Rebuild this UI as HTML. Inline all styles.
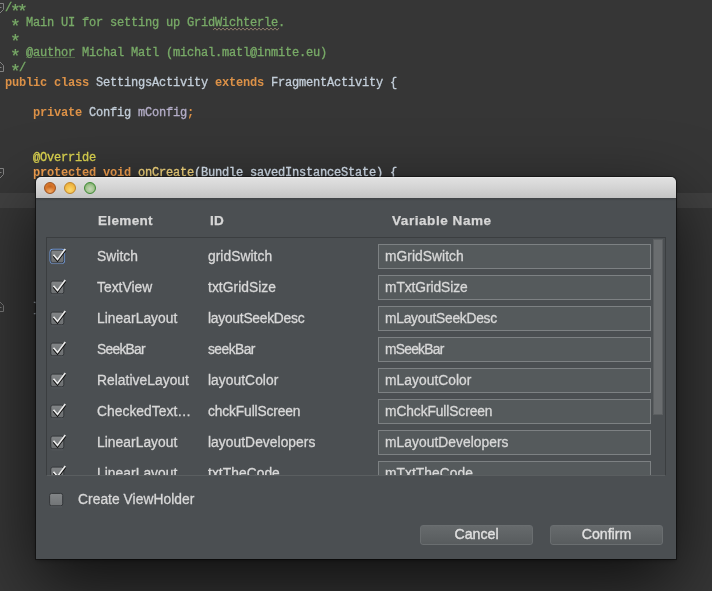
<!DOCTYPE html>
<html>
<head>
<meta charset="utf-8">
<title>Dialog</title>
<style>
html,body{margin:0;padding:0;}
body{width:712px;height:591px;overflow:hidden;background:#363636;position:relative;font-family:"Liberation Sans",sans-serif;}
#ed{position:absolute;left:0;top:0;width:712px;height:591px;overflow:hidden;will-change:transform;}
.caret{position:absolute;top:193px;height:15px;background:rgba(255,255,255,0.05);}
.ln{position:absolute;left:5px;height:15px;line-height:15px;white-space:pre;font-family:"Liberation Mono",monospace;font-size:12px;letter-spacing:-0.2px;color:#c3ced9;-webkit-text-stroke:0.3px currentColor;}
.c{color:#78aa67;}
.s{display:inline-block;width:11px;margin:0 -2px;letter-spacing:0;font-size:18px;line-height:1px;position:relative;top:6px;text-align:center;-webkit-text-stroke:0.2px currentColor;}
.k{color:#dc9147;font-weight:bold;-webkit-text-stroke:0;}
.f{color:#b4aec8;}
.a{color:#d0c846;}
.m{color:#f5c673;}
#dlg{position:absolute;left:36px;top:177px;width:640px;height:382px;background:#4b4f52;border-radius:5px 5px 0 0;box-shadow:0 25px 70px 0 rgba(0,0,0,0.72),0 1px 5px rgba(0,0,0,0.4),0 0 0 1px rgba(0,0,0,0.4);}
#tb{position:absolute;left:0;top:0;width:640px;height:21px;border-radius:5px 5px 0 0;background:linear-gradient(#eeeeee 0,#e0e0e0 7%,#d4d4d4 50%,#c4c4c4 100%);}
#tbs{position:absolute;left:0;top:21px;width:640px;height:3px;background:linear-gradient(#3e4144,#4b4f52);}
.tl{position:absolute;top:5px;width:12px;height:12px;border-radius:50%;box-sizing:border-box;}
.t{position:absolute;white-space:pre;font-size:13.8px;line-height:16px;letter-spacing:0.05px;color:#d8d8d8;-webkit-text-stroke:0.3px currentColor;}
.h{-webkit-text-stroke:0.25px currentColor;font-weight:bold;font-size:12.3px;color:#d6d6d6;letter-spacing:0.3px;transform:scaleX(1.1);transform-origin:0 0;}
#tbl{position:absolute;left:10px;top:60px;width:618px;height:237px;border:1px solid #3b3e40;border-bottom:1px solid #5a5e60;overflow:hidden;}
.row{position:absolute;left:0;width:619px;height:25px;}
.cb{position:absolute;left:2px;top:1.5px;width:19px;height:19px;overflow:visible;}
.e{left:50px;top:5px;}
.i{left:161px;top:5px;}
.fld{position:absolute;left:331px;top:0;width:271px;height:23px;border:1px solid #7d8183;background:#555a5c;}
.v{left:6px;top:4px;}
#sb{position:absolute;left:606px;top:1px;width:10px;height:176px;background:#6a6d6f;border:1px solid #5c5f61;box-sizing:border-box;}
.btn{position:absolute;top:348px;width:113px;height:20px;box-sizing:border-box;border:1px solid #6a6e70;border-radius:3px;background:linear-gradient(#666a6c,#585c5e);color:#e0e0e0;font-size:14.2px;line-height:17px;text-align:center;-webkit-text-stroke:0.35px currentColor;}
</style>
</head>
<body>
<svg width="0" height="0" style="position:absolute">
<defs>
<linearGradient id="cg" x1="0" y1="0" x2="0" y2="1"><stop offset="0" stop-color="#838688"/><stop offset="1" stop-color="#6b6e70"/></linearGradient>
<linearGradient id="cg2" x1="0" y1="0" x2="0" y2="1"><stop offset="0" stop-color="#838688"/><stop offset="1" stop-color="#717476"/></linearGradient>
<filter id="bl" x="-50%" y="-50%" width="200%" height="200%"><feGaussianBlur stdDeviation="0.7"/></filter>
<symbol id="ck" viewBox="0 0 19 19">
<rect x="1.8" y="4.1" width="13" height="12.7" rx="2" fill="url(#cg)" stroke="#34373a"/>
<path d="M2.5 17.8 H14" stroke="#62666a" stroke-width="0.8" opacity="0.7"/>
<path d="M4.5 10.2 L8.5 14.9 L16.3 4.4" fill="none" stroke="#0c0c0c" stroke-width="1.8" stroke-linejoin="miter"/>
<path d="M4.5 8.8 L8.5 13.5 L16.3 3.0" fill="none" stroke="#ececec" stroke-width="1.55" stroke-linejoin="miter"/>
</symbol>
<symbol id="ckf" viewBox="0 0 19 19">
<rect x="1.5" y="3.8" width="13.6" height="13.3" rx="2.5" fill="none" stroke="#76a1e6" stroke-width="1.9" filter="url(#bl)"/>
<use href="#ck"/>
</symbol>
<symbol id="cku" viewBox="0 0 19 19">
<rect x="1.6" y="4.4" width="13.1" height="12.4" rx="2" fill="url(#cg2)" stroke="#34373a"/>
<path d="M2.5 17.8 H14" stroke="#62666a" stroke-width="0.8" opacity="0.7"/>
</symbol>
</defs></svg>
<div id="ed">
<svg id="folds" width="10" height="330" viewBox="0 0 10 330" style="position:absolute;left:0;top:0" fill="none" stroke="#828282" stroke-width="1">
<path d="M-1 3.5 H3.5 V9.5 L-0.5 13.5 M-1 7.5 H1.5"/>
<path d="M-0.5 61.5 L3.5 65.5 V71.5 H-1 M-1 67.5 H1.5"/>
<path d="M-1 168.5 H3.5 V174.5 L-0.5 178.5 M-1 172.5 H1.5"/>
<path d="M-0.5 301.5 L3.5 305.5 V311.5 H-1 M-1 307.5 H1.5" stroke="#777"/>
</svg>
<div class="ln" style="top:300.5px;color:#aab3bc">    }</div>
<svg width="68" height="5" viewBox="0 0 68 5" style="position:absolute;left:213px;top:26.5px" fill="none" stroke="#a58e78" stroke-width="0.8"><path d="M0 3.2 L2 1 L4 3.2 L6 1 L8 3.2 L10 1 L12 3.2 L14 1 L16 3.2 L18 1 L20 3.2 L22 1 L24 3.2 L26 1 L28 3.2 L30 1 L32 3.2 L34 1 L36 3.2 L38 1 L40 3.2 L42 1 L44 3.2 L46 1 L48 3.2 L50 1 L52 3.2 L54 1 L56 3.2 L58 1 L60 3.2 L62 1 L64 3.2 L66 1"/></svg>
<div class="ln c" style="top:0.5px">/<span class="s">*</span><span class="s">*</span></div>
<div class="ln c" style="top:15.5px"> <span class="s">*</span> Main UI for setting up GridWichterle.</div>
<div class="ln c" style="top:30.5px"> <span class="s">*</span></div>
<div class="ln c" style="top:45.5px"> <span class="s">*</span> <span style="text-decoration:underline;text-decoration-color:rgba(120,170,103,0.38);text-decoration-thickness:1px;text-underline-offset:1px">@author</span> Michal Matl (michal.matl@inmite.eu)</div>
<div class="ln c" style="top:60.5px"> <span class="s">*</span>/</div>
<div class="ln" style="top:75.5px"><span class="k">public class</span> SettingsActivity <span class="k">extends</span> FragmentActivity {</div>
<div class="ln" style="top:105.5px">    <span class="k">private</span> Config <span class="f">mConfig</span><span class="k">;</span></div>
<div class="ln" style="top:150.5px">    <span class="a" style="color:#ded650">@Override</span></div>
<div class="ln" style="top:165.5px;color:#dce8f5">    <span class="k" style="color:#f9a451">protected void</span> <span class="m" style="color:#ffdf82">onCreate</span>(Bundle savedInstanceState) {</div>
</div>

<div id="dlg">
<div id="tb">
<div class="tl" style="left:8px;background:radial-gradient(circle at 50% 85%,#f2ad66 0%,rgba(242,173,102,0) 50%),radial-gradient(circle at 50% 42%,#c2631e 0%,#db792d 55%,#b85a1a 100%);border:1px solid #9c5320;"></div>
<div class="tl" style="left:28px;background:radial-gradient(circle at 50% 70%,#fbd870 0%,#f3be4a 50%,#e2a030 100%);border:1px solid #c08428;"></div>
<div class="tl" style="left:48px;background:radial-gradient(circle at 50% 60%,#c4d6b8 0%,#a6c594 45%,#62a04e 100%);border:1px solid #3f8a35;"></div>
</div>
<div id="tbs"></div>
<div class="t h" style="left:62px;top:35.5px">Element</div>
<div class="t h" style="left:174px;top:35.5px">ID</div>
<div class="t h" style="left:356px;top:35.5px;letter-spacing:0.5px">Variable Name</div>
<div id="tbl">
<div class="row" style="top:6px"><svg class="cb" viewBox="0 0 19 19"><use href="#ckf"/></svg><div class="t e">Switch</div><div class="t i">gridSwitch</div><div class="fld"><div class="t v">mGridSwitch</div></div></div>
<div class="row" style="top:37px"><svg class="cb" viewBox="0 0 19 19"><use href="#ck"/></svg><div class="t e">TextView</div><div class="t i">txtGridSize</div><div class="fld"><div class="t v" style="letter-spacing:-0.075px">mTxtGridSize</div></div></div>
<div class="row" style="top:68px"><svg class="cb" viewBox="0 0 19 19"><use href="#ck"/></svg><div class="t e">LinearLayout</div><div class="t i" style="letter-spacing:-0.24px">layoutSeekDesc</div><div class="fld"><div class="t v" style="letter-spacing:-0.26px">mLayoutSeekDesc</div></div></div>
<div class="row" style="top:99px"><svg class="cb" viewBox="0 0 19 19"><use href="#ck"/></svg><div class="t e" style="letter-spacing:-0.72px">SeekBar</div><div class="t i" style="letter-spacing:-0.53px">seekBar</div><div class="fld"><div class="t v" style="letter-spacing:-0.74px">mSeekBar</div></div></div>
<div class="row" style="top:130px"><svg class="cb" viewBox="0 0 19 19"><use href="#ck"/></svg><div class="t e">RelativeLayout</div><div class="t i">layoutColor</div><div class="fld"><div class="t v">mLayoutColor</div></div></div>
<div class="row" style="top:161px"><svg class="cb" viewBox="0 0 19 19"><use href="#ck"/></svg><div class="t e">CheckedText…</div><div class="t i" style="letter-spacing:-0.14px">chckFullScreen</div><div class="fld"><div class="t v" style="letter-spacing:-0.1px">mChckFullScreen</div></div></div>
<div class="row" style="top:192px"><svg class="cb" viewBox="0 0 19 19"><use href="#ck"/></svg><div class="t e">LinearLayout</div><div class="t i">layoutDevelopers</div><div class="fld"><div class="t v">mLayoutDevelopers</div></div></div>
<div class="row" style="top:223px"><svg class="cb" viewBox="0 0 19 19"><use href="#ck"/></svg><div class="t e">LinearLayout</div><div class="t i">txtTheCode</div><div class="fld"><div class="t v">mTxtTheCode</div></div></div>
<div id="sb"></div>
</div>
<svg class="cb" style="left:12px;top:311.5px" viewBox="0 0 19 19"><use href="#cku"/></svg>
<div class="t" style="left:42px;top:315px">Create ViewHolder</div>
<div class="btn" style="left:384px">Cancel</div>
<div class="btn" style="left:514px">Confirm</div>
</div>
<div class="caret" style="left:0;width:35px"></div>
<div class="caret" style="left:677px;width:35px"></div>
</body>
</html>
